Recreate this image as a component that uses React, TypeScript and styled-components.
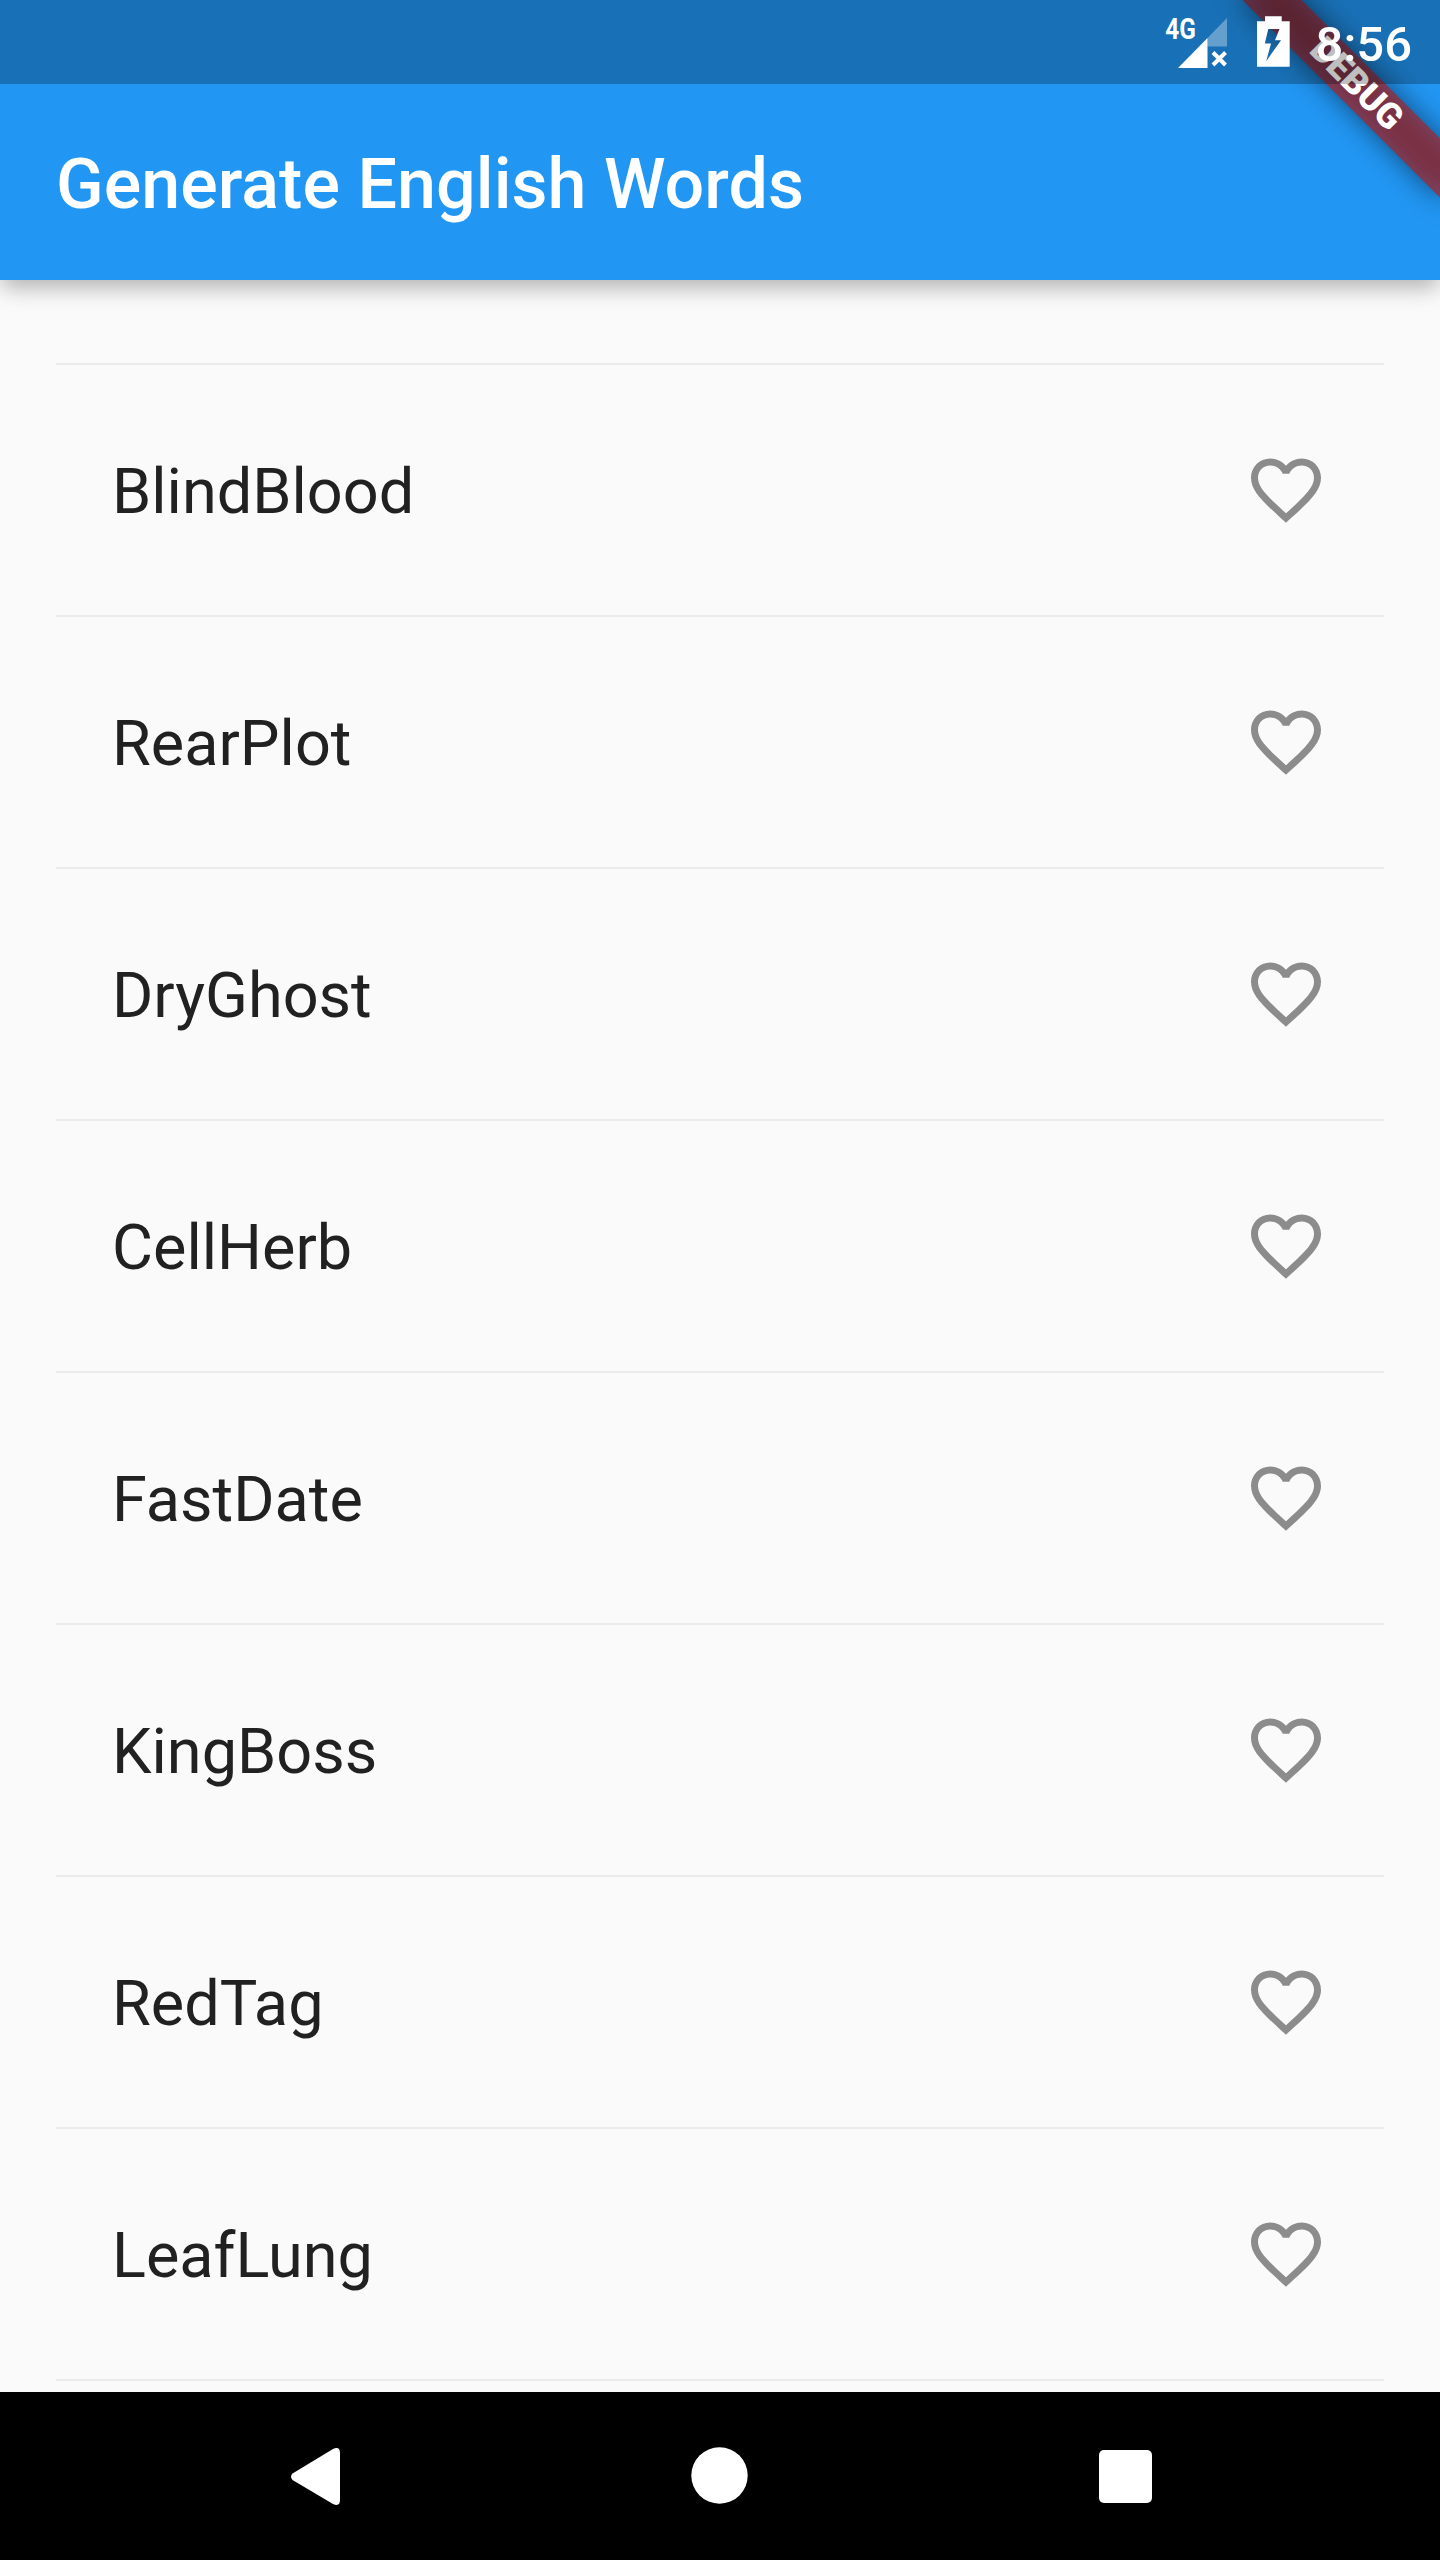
import React from "react";
import styled, { createGlobalStyle } from "styled-components";

const GlobalStyle = createGlobalStyle`
  *, *::before, *::after { box-sizing: border-box; }
  body { margin: 0; background: #fafafa; font-family: Roboto, sans-serif; }
`;

const Screen = styled.div`
  position: relative;
  display: flex;
  flex-direction: column;
  width: 1440px;
  height: 2560px;
  overflow: hidden;
  background: #fafafa;
`;

const AppBar = styled.header`
  position: relative;
  z-index: 1;
  flex: none;
  display: flex;
  align-items: center;
  height: 280px;
  padding: 88px 56px 0;
  background: #2196f3;
  box-shadow: 0 10px 18px -3px rgba(0, 0, 0, 0.18),
    0 8px 26px 0 rgba(0, 0, 0, 0.13);
`;

const Title = styled.h1`
  margin: 0;
  color: #fff;
  font-size: 70px;
  font-weight: 500;
  line-height: 82px;
  letter-spacing: 0.04px;
  white-space: nowrap;
`;

const BannerClip = styled.div`
  position: absolute;
  z-index: 2;
  top: 0;
  right: 0;
  width: 330px;
  height: 330px;
  overflow: hidden;
`;

const Ribbon = styled.div`
  position: absolute;
  top: 97.6px;
  left: 190px;
  width: 280px;
  height: 42px;
  transform-origin: 140px -97.6px;
  transform: rotate(45deg);
  background: rgba(183, 28, 28, 0.627);
  color: #fff;
  font-size: 35.7px;
  font-weight: 900;
  line-height: 40.5px;
  text-align: center;
`;

const RibbonShadow = styled(Ribbon)`
  background: rgba(0, 0, 0, 0.5);
  filter: blur(13.9px);
`;

const StatusBar = styled.div`
  position: absolute;
  z-index: 3;
  top: 0;
  left: 0;
  display: flex;
  justify-content: flex-end;
  align-items: center;
  width: 100%;
  height: 84px;
  padding-right: 28px;
  background: rgba(0, 0, 0, 0.25);
`;

const StatusIcons = styled.svg`
  flex: none;
  width: 150px;
  height: 84px;
`;

const NetworkLabel = styled.text`
  fill: #fff;
  font-family: Roboto, sans-serif;
  font-size: 29.5px;
  font-weight: 700;
`;

const Clock = styled.time`
  width: 102px;
  padding-top: 5px;
  color: #fff;
  font-size: 49px;
  font-weight: 500;
  line-height: 84px;
  text-align: right;
`;

const WordList = styled.ul`
  flex: 1;
  min-height: 0;
  margin: 0;
  padding: 83px 56px 0;
  list-style: none;
  overflow: hidden;
`;

const WordRow = styled.li`
  display: flex;
  align-items: center;
  justify-content: space-between;
  height: 252px;
  padding: 0 56px;
  border-top: 2px solid #ebebeb;
`;

const Word = styled.span`
  padding-top: 3px;
  color: #212121;
  font-size: 63px;
  line-height: 74px;
`;

const Heart = styled.svg`
  width: 84px;
  height: 84px;
  fill: #8c8c8c;
`;

const NavBar = styled.nav`
  flex: none;
  height: 168px;
  background: #000;
`;

const NavIcons = styled.svg`
  display: block;
  width: 1440px;
  height: 168px;
  fill: #fff;
`;

const words = [
  "BlindBlood",
  "RearPlot",
  "DryGhost",
  "CellHerb",
  "FastDate",
  "KingBoss",
  "RedTag",
  "LeafLung",
];

const HeartIcon = () => (
  <Heart viewBox="0 0 24 24">
    <path d="M16.5 3c-1.74 0-3.41.81-4.5 2.09C10.91 3.81 9.24 3 7.5 3 4.42 3 2 5.42 2 8.5c0 3.78 3.4 6.86 8.55 11.54L12 21.35l1.45-1.32C18.6 15.36 22 12.28 22 8.5 22 5.42 19.58 3 16.5 3zm-4.4 15.55l-.1.1-.1-.1C7.14 14.24 4 11.39 4 8.5 4 6.5 5.5 5 7.5 5c1.54 0 3.04.99 3.57 2.36h1.87C13.46 5.99 14.96 5 16.5 5c2 0 3.5 1.5 3.5 3.5 0 2.89-3.14 5.74-7.9 10.05z" />
  </Heart>
);

export default function App() {
  return (
    <Screen>
      <GlobalStyle />
      <AppBar>
        <Title>Generate English Words</Title>
      </AppBar>
      <BannerClip>
        <RibbonShadow />
        <Ribbon>DEBUG</Ribbon>
      </BannerClip>
      <StatusBar>
        <StatusIcons viewBox="1160 0 150 84">
          <NetworkLabel x="1165.3" y="39.3" textLength="30.6" lengthAdjust="spacingAndGlyphs">
            4G
          </NetworkLabel>
          <path d="M1227 18V46.5H1207.5V38Z" fill="#fff" fillOpacity=".33" />
          <path d="M1178 68L1207.5 38V68Z" fill="#fff" />
          <path d="M1213 52.5L1225.5 65M1225.5 52.5L1213 65" stroke="#fff" strokeWidth="4" />
          <path
            d="M1265 16.3h16.7v5h8v45.4h-32.7v-45.4h8zM1268.3 29l-3.5 14.5h6.2l-4.8 17.7 14.8-21h-6l4.5-11.2z"
            fill="#fff"
            fillRule="evenodd"
          />
        </StatusIcons>
        <Clock>8:56</Clock>
      </StatusBar>
      <WordList>
        {words.map((word) => (
          <WordRow key={word}>
            <Word>{word}</Word>
            <HeartIcon />
          </WordRow>
        ))}
        <WordRow />
      </WordList>
      <NavBar>
        <NavIcons viewBox="0 2392 1440 168">
          <path d="M292.5 2473.5 Q289.5 2476.7 292.5 2480 L333 2504 Q340 2507 340 2500 V2453 Q340 2446 333 2449 Z" />
          <circle cx="719.5" cy="2475.5" r="28.2" />
          <rect x="1099" y="2450" width="53" height="53" rx="5" />
        </NavIcons>
      </NavBar>
    </Screen>
  );
}
